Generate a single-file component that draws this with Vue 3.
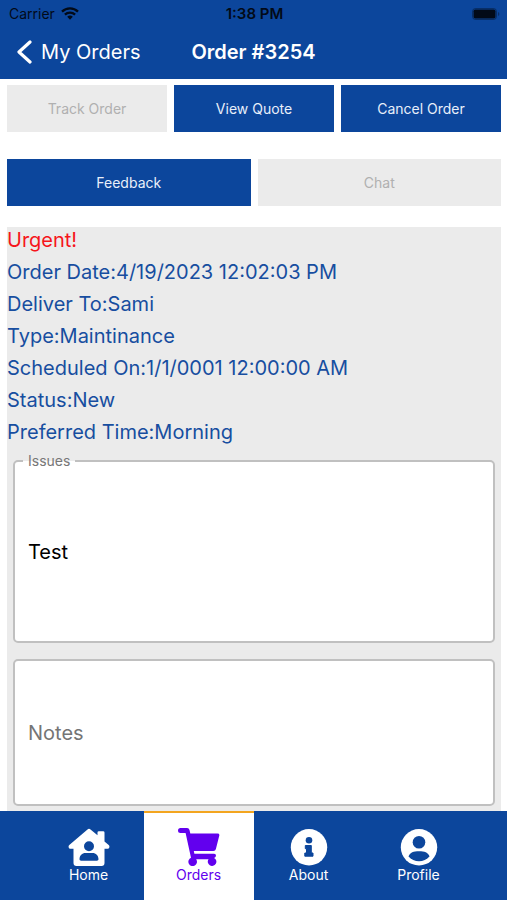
<script setup>
import { ref } from 'vue'

const details = [
  { label: 'Order Date', value: '4/19/2023 12:02:03 PM' },
  { label: 'Deliver To', value: 'Sami' },
  { label: 'Type', value: 'Maintinance' },
  { label: 'Scheduled On', value: '1/1/0001 12:00:00 AM' },
  { label: 'Status', value: 'New' },
  { label: 'Preferred Time', value: 'Morning' },
]
const issues = ref('Test')
const notes = ref('')
</script>

<template>
  <div class="screen">
    <header class="top">
      <div class="status">
        <span class="carrier">
          Carrier
          <svg class="wifi" viewBox="0 0 18 13" aria-hidden="true">
            <path d="M1 4.6a11.5 11.5 0 0 1 16 0M3.9 7.6a7.4 7.4 0 0 1 10.2 0" fill="none" stroke="currentColor" stroke-width="2.3" />
            <path d="M6.2 9.8a4.1 4.1 0 0 1 5.6 0L9 12.7z" fill="currentColor" />
          </svg>
        </span>
        <span class="clock">1:38 PM</span>
        <svg class="battery" viewBox="0 0 28 12" aria-hidden="true">
          <rect x=".5" y=".5" width="24" height="11" rx="3" fill="none" stroke="currentColor" opacity=".4" />
          <rect x="1.5" y="1.5" width="22" height="9" rx="1.8" fill="currentColor" />
          <path d="M26 4v4c1.8-.7 1.8-3.3 0-4z" fill="currentColor" opacity=".4" />
        </svg>
      </div>
      <nav class="titlebar">
        <a class="back" href="#orders">
          <svg viewBox="0 0 16 24" aria-hidden="true"><path d="M14 2 3 12l11 10" fill="none" stroke="currentColor" stroke-width="3.2" stroke-linecap="round" stroke-linejoin="round" /></svg>
          My Orders
        </a>
        <h1>Order #3254</h1>
      </nav>
    </header>

    <main>
      <div class="actions">
        <button type="button" disabled>Track Order</button>
        <button type="button">View Quote</button>
        <button type="button">Cancel Order</button>
      </div>
      <div class="actions">
        <button type="button">Feedback</button>
        <button type="button" disabled>Chat</button>
      </div>
      <section class="panel">
        <p class="urgent">Urgent!</p>
        <p v-for="d in details" :key="d.label">{{ d.label }}:{{ d.value }}</p>
        <div class="field issues">
          <label for="issues">Issues</label>
          <input id="issues" v-model="issues" type="text" />
        </div>
        <div class="field notes">
          <input v-model="notes" type="text" placeholder="Notes" aria-label="Notes" />
        </div>
      </section>
    </main>

    <nav class="tabs">
      <a href="#home">
        <svg viewBox="0 0 42 38" aria-hidden="true">
          <path fill="currentColor" fill-rule="evenodd" d="M19.5 1.4a2.4 2.4 0 0 1 3 0L29.5 7.3V4.6q0-1.4 1.4-1.4h4.2q1.4 0 1.4 1.4v8.8l4.2 3.7c1.5 1.4.6 3.7-1.4 3.7h-2.8V35q0 3-3 3H8.5q-3 0-3-3V20.8H2.7c-2 0-2.9-2.3-1.4-3.7zM21 13.2a5 5 0 1 0 0 10 5 5 0 0 0 0-10zM17.5 25c-3.5 0-5.8 2.5-6 6 0 1 .6 1.700 1.600 1.700h15.800c1 0 1.600-.7 1.600-1.700-.2-3.500-2.500-6-6-6z" />
        </svg>
        Home
      </a>
      <a href="#orders" class="active" aria-current="page">
        <svg viewBox="0 0 42 38" aria-hidden="true">
          <path fill="currentColor" d="M2.5 0h6.6q1.9 0 2.4 1.9l.8 3.5h27.2q2.3 0 1.8 2.2l-3.400 13.500q-.5 2-2.500 2H15.800l.6 2.600h19.700q1.900 0 1.900 1.900t-1.900 2.300a4.300 4.300 0 1 1-5.600 1.400H18.200a4.300 4.300 0 1 1-5.200-1.500L7.600 5H2.500a2.500 2.500 0 0 1 0-5z" />
        </svg>
        Orders
      </a>
      <a href="#about">
        <svg viewBox="0 0 42 38" aria-hidden="true">
          <circle cx="21" cy="19.3" r="18.2" fill="currentColor" />
          <g class="cut">
            <circle cx="21" cy="12.2" r="3.3" />
            <path d="M17.3 17.5h6v7.500h1.700v3.200h-8.200V25h1.700v-4.300h-1.200z" stroke-width="1" stroke-linejoin="round" />
          </g>
        </svg>
        About
      </a>
      <a href="#profile">
        <svg viewBox="0 0 42 38" aria-hidden="true">
          <circle cx="21" cy="19.3" r="18.2" fill="currentColor" />
          <g class="cut">
            <circle cx="21" cy="14.3" r="6.3" />
            <path d="M10.500 28.500c1.500-4 5-5.200 10.500-5.200s9 1.200 10.500 5.200a14.200 14.200 0 0 1-21 0z" />
          </g>
        </svg>
        Profile
      </a>
    </nav>
  </div>
</template>

<style>
body {
  margin: 0;
  background: #fff;
}
</style>

<style scoped>
.screen {
  --blue: #0c469c;
  display: flex;
  flex-direction: column;
  min-height: 100vh;
  font-family: Inter, "Liberation Sans", sans-serif;
  font-size: 20px;
}
.top {
  background: var(--blue);
  color: #fff;
}
.status {
  display: grid;
  grid-template-columns: 1fr auto 1fr;
  align-items: center;
  height: 27px;
  padding: 0 7px 0 9px;
  color: #020a18;
}
.carrier {
  display: flex;
  align-items: center;
  gap: 6px;
  font-size: 14px;
}
.wifi {
  width: 18px;
  height: 13px;
}
.clock {
  font-size: 15px;
  font-weight: 600;
}
.battery {
  width: 28px;
  height: 12px;
  justify-self: end;
}
.titlebar {
  display: grid;
  grid-template-columns: 1fr auto 1fr;
  align-items: center;
  height: 50px;
  padding: 0 16px 2px;
}
.back {
  display: flex;
  align-items: center;
  gap: 9px;
  color: inherit;
  text-decoration: none;
}
.back svg {
  width: 16px;
  height: 24px;
}
h1 {
  margin: 0;
  font-size: 20px;
  font-weight: 600;
}
main {
  flex: 1;
  display: flex;
  flex-direction: column;
  padding: 6px 6px 0 7px;
}
.actions {
  display: flex;
  gap: 7px;
  margin-bottom: 27px;
}
.actions + .actions {
  margin-bottom: 21px;
}
button {
  flex: 1;
  height: 47px;
  padding: 0;
  border: 0;
  background: var(--blue);
  color: #e8effa;
  font: 14px Inter, "Liberation Sans", sans-serif;
}
button:disabled {
  background: #ebebeb;
  color: #b0b0b0;
}
.panel {
  flex: 1;
  padding: 0 6px 5px;
  background: #ebebeb;
  color: #174ea0;
}
p {
  margin: 0 -6px;
  height: 32px;
  line-height: 26px;
}
.urgent {
  color: #f6151b;
}
.field {
  position: relative;
  box-sizing: border-box;
  padding: 0 8px;
  border: 2px solid #c0c0c0;
  border-radius: 5px;
  background: #fff;
}
.issues {
  height: 183px;
  margin: 9px 0 16px;
}
.notes {
  height: 147px;
}
label {
  position: absolute;
  top: -9px;
  left: 8px;
  padding: 0 5px;
  background: linear-gradient(#ebebeb 50%, #fff 50%);
  color: #777;
  font-size: 14px;
  line-height: 16px;
}
input {
  display: block;
  width: 100%;
  height: 100%;
  padding: 0 5px;
  box-sizing: border-box;
  border: 0;
  outline: 0;
  background: transparent;
  color: #000;
  font: inherit;
}
input::placeholder {
  color: #757575;
  opacity: 1;
}
.tabs {
  display: flex;
  justify-content: center;
  height: 89px;
  background: var(--blue);
}
.tabs a {
  display: flex;
  flex: 0 1 110px;
  flex-direction: column;
  align-items: center;
  padding-top: 15px;
  border-top: 2px solid transparent;
  color: #fff;
  font-size: 14px;
  line-height: 17px;
  text-decoration: none;
}
.tabs .active {
  border-top-color: #f3a51f;
  background: #fff;
  color: #6200ee;
}
.tabs svg {
  width: 42px;
  height: 38px;
}
.cut {
  fill: var(--blue);
  stroke: var(--blue);
  stroke-width: 0;
}
</style>
